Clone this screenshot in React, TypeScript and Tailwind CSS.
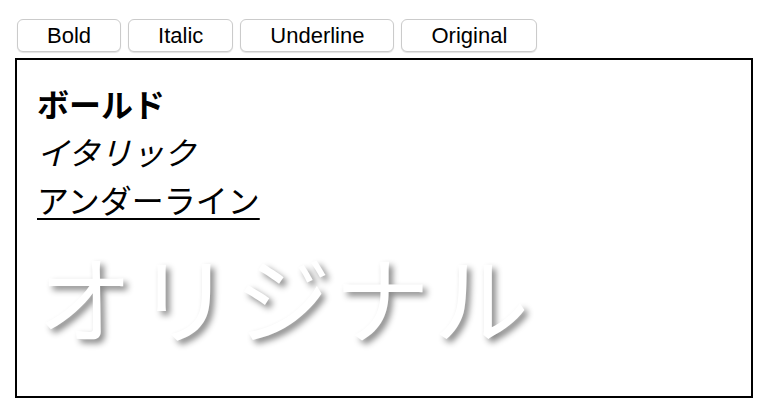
export default function App() {
  const buttons = ["Bold", "Italic", "Underline", "Original"];
  return (
    <div className="h-[418px] w-[766px] bg-white" style={{ fontFamily: '"Noto Sans CJK JP", sans-serif' }}>
      <div className="flex gap-[7px] pl-[17px] pt-[19px]">
        {buttons.map((b) => (
          <button
            key={b}
            className="h-[33px] rounded-[6px] border border-[#cbcbcb] bg-white px-[29px] text-[22px] leading-none text-black shadow-[0_1px_1px_rgba(0,0,0,0.12)]"
            style={{ fontFamily: '"Liberation Sans", Arial, sans-serif' }}
          >
            {b}
          </button>
        ))}
      </div>
      <div className="ml-[15px] mt-[6px] h-[340px] w-[738px] border-2 border-black px-[20px] pt-[19px]">
        <div className="text-[32px] font-bold leading-[48px]">ボールド</div>
        <div className="text-[32px] italic leading-[48px]">イタリック</div>
        <div className="text-[32px] leading-[48px]">
          <span className="underline decoration-[2px] underline-offset-[5px]">アンダーライン</span>
        </div>
        <div className="text-[96px] leading-[144px] tracking-[3px] text-white [text-shadow:4px_4px_6px_#888]">オリジナル</div>
      </div>
    </div>
  );
}
